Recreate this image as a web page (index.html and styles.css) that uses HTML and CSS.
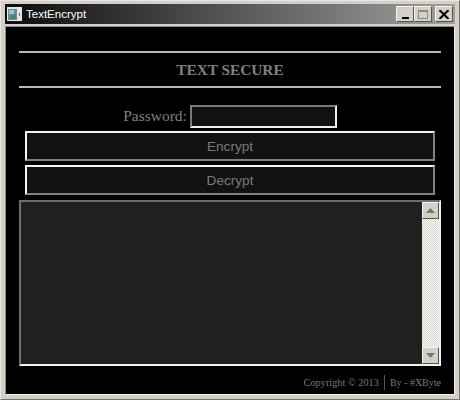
FILE: index.html
```html
<!DOCTYPE html>
<html>
<head>
    <link rel="stylesheet" href="styles.css">
</head>
<body>
    <div class="window">
        <div class="titlebar">
            <svg class="app-icon" width="15" height="14" viewBox="0 0 15 14">
                <rect x="0" y="0" width="15" height="14" fill="#e4e8e8"/>
                <rect x="1" y="2" width="9" height="11" fill="#5f8f98"/>
                <rect x="2" y="3" width="5" height="4" fill="#a4c0cc"/>
                <rect x="4" y="8" width="5" height="4" fill="#4f7f70"/>
                <rect x="12" y="6" width="1" height="3" fill="#667"/>
            </svg>
            <span class="title">TextEncrypt</span>
            <div class="controls">
                <div class="ctrl"><span class="min-glyph"></span></div>
                <div class="ctrl"><span class="max-glyph"></span></div>
                <div class="ctrl close-ctrl">
                    <svg width="10" height="9" viewBox="0 0 10 9"><path d="M0.5 0 L9.5 9 M9.5 0 L0.5 9" stroke="#000" stroke-width="2" fill="none"/></svg>
                </div>
            </div>
        </div>
        <div class="client">
            <hr class="rule">
            <h1>TEXT SECURE</h1>
            <hr class="rule">
            <div class="passwordRow">
                <label for="password">Password:</label>
                <input type="password" id="password">
            </div>
            <button type="button" class="action">Encrypt</button>
            <button type="button" class="action action-dim">Decrypt</button>
            <div class="output">
                <div class="output-text"></div>
                <div class="scrollbar">
                    <div class="arrow"><svg width="9" height="5" viewBox="0 0 9 5"><path d="M4.5 0 L9 5 L0 5 Z" fill="#77776f"/></svg></div>
                    <div class="track"></div>
                    <div class="arrow"><svg width="9" height="5" viewBox="0 0 9 5"><path d="M0 0 L9 0 L4.5 5 Z" fill="#77776f"/></svg></div>
                </div>
            </div>
            <div class="footer">
                <span class="copy">Copyright © 2013</span>
                <span class="by">By - #XByte</span>
            </div>
        </div>
    </div>
</body>
</html>
```

FILE: styles.css
```css
html, body {
    margin: 0;
    padding: 0;
    background: #000;
}
.window {
    width: 460px;
    height: 400px;
    box-sizing: border-box;
    padding: 3px 4px 4px 4px;
    background: #d4d0c8;
    border-top: 1px solid #e8e6e0;
    border-left: 1px solid #e8e6e0;
    border-right: 1px solid #77756f;
    border-bottom: 1px solid #77756f;
    display: flex;
    flex-direction: column;
}
.titlebar {
    height: 20px;
    flex-shrink: 0;
    display: flex;
    align-items: center;
    background: linear-gradient(to right, #0c0c0c 0%, #a0a0a0 100%);
}
.app-icon {
    margin-left: 2px;
    flex-shrink: 0;
}
.title {
    margin-left: 4px;
    font-family: "Liberation Sans", Arial, sans-serif;
    font-size: 11.5px;
    color: #fff;
}
.controls {
    margin-left: auto;
    margin-right: 2px;
    display: flex;
}
.ctrl {
    width: 18px;
    height: 16px;
    box-sizing: border-box;
    background: #d4d0c8;
    border: 1px solid;
    border-color: #f4f4f0 #55544f #55544f #f4f4f0;
    display: flex;
    align-items: center;
    justify-content: center;
}
.close-ctrl {
    margin-left: 3px;
}
.min-glyph {
    width: 7px;
    height: 2px;
    background: #000;
    margin-top: 7px;
}
.max-glyph {
    width: 10px;
    height: 9px;
    border: 1px solid #8c8a84;
    border-top-width: 2px;
    box-sizing: border-box;
}
.client {
    flex: 1;
    margin-top: 2px;
    padding: 0 13px;
    background: #000;
    border-top: 1px solid #8c8a84;
    border-left: 1px solid #8c8a84;
    border-right: 1px solid #f0efe9;
    border-bottom: 1px solid #f0efe9;
    display: flex;
    flex-direction: column;
    min-height: 0;
}
.rule {
    width: 100%;
    height: 2px;
    margin: 0;
    border: 0;
    background: #b8b8b4;
    flex-shrink: 0;
}
.client > .rule:first-child {
    margin-top: 24px;
}
h1 {
    margin: 0;
    height: 33px;
    line-height: 33px;
    text-align: center;
    font-family: "Liberation Serif", "Times New Roman", serif;
    font-size: 15.3px;
    font-weight: bold;
    color: #808080;
}
.passwordRow {
    margin-top: 16px;
    height: 24px;
    display: flex;
    justify-content: center;
    align-items: center;
}
label {
    font-family: "Liberation Serif", "Times New Roman", serif;
    font-size: 15.5px;
    color: #808080;
    margin-right: 3px;
}
input[type="password"] {
    width: 147px;
    height: 23px;
    box-sizing: border-box;
    background: #111;
    border: 2px solid;
    border-color: #7a7a7a #f0f0f0 #f0f0f0 #7a7a7a;
    padding: 0;
    margin: 0;
}
.action {
    display: block;
    width: 410px;
    margin: 3px 0 0 6px;
    height: 30px;
    flex-shrink: 0;
    box-sizing: border-box;
    background: #111;
    border: 2px solid;
    border-color: #f4f4f4 #808080 #808080 #f4f4f4;
    font-family: "Liberation Sans", Arial, sans-serif;
    font-size: 13.6px;
    color: #7a7a7a;
    padding: 0;
}
.action-dim {
    margin-top: 4px;
}
.output {
    margin-top: 5px;
    height: 166px;
    flex-shrink: 0;
    box-sizing: border-box;
    background: #202020;
    border: 2px solid;
    border-color: #6e6e6e #f0f0f0 #f0f0f0 #6e6e6e;
    display: flex;
}
.output-text {
    flex: 1;
}
.scrollbar {
    width: 17px;
    display: flex;
    flex-direction: column;
}
.arrow {
    height: 17px;
    flex-shrink: 0;
    box-sizing: border-box;
    background: #d4d0c8;
    border: 1px solid;
    border-color: #f4f4f0 #55544f #55544f #f4f4f0;
    display: flex;
    align-items: center;
    justify-content: center;
}
.track {
    flex: 1;
    background-color: #f4f3ef;
    background-image: repeating-conic-gradient(#d4d0c8 0 25%, #fff 0 50%);
    background-size: 2px 2px;
}
.footer {
    margin-top: 9px;
    display: flex;
    justify-content: flex-end;
    align-items: center;
    height: 15px;
    font-family: "Liberation Serif", "Times New Roman", serif;
    font-size: 10.3px;
    color: #7a7a7a;
}
.copy {
    padding-right: 5px;
    line-height: 15px;
    border-right: 1px solid #555;
}
.by {
    padding-left: 5px;
    font-size: 10px;
}
```
